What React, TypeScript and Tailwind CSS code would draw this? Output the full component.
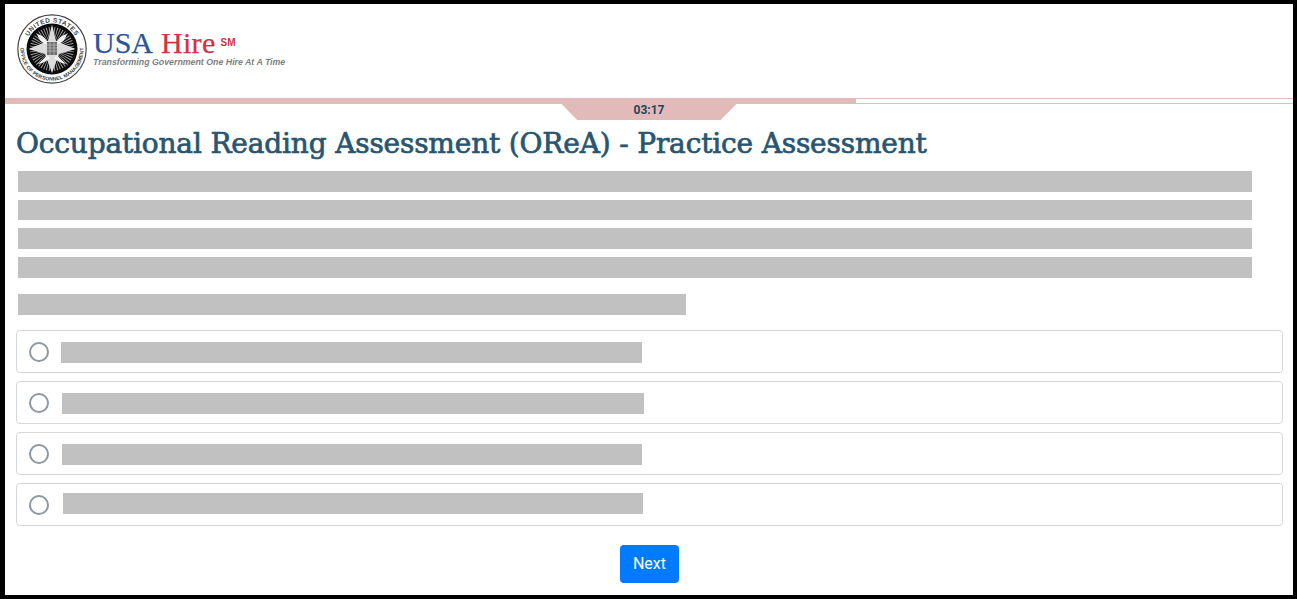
import React from 'react';

const Bar = ({ className }: { className: string }) => <div className={`bg-[#c1c1c1] ${className}`} />;

const Seal = () => {
  const rays = Array.from({ length: 48 }, (_, i) => i * 7.5);
  return (
    <svg width="70" height="70" viewBox="0 0 70 70" className="shrink-0">
      <defs>
        <path id="sealTop" d="M 35 35 m -26.6 0 a 26.6 26.6 0 1 1 53.2 0" />
        <path id="sealBottom" d="M 35 35 m -31.6 0 a 31.6 31.6 0 0 0 63.2 0" />
      </defs>
      <circle cx="35" cy="35" r="34.2" fill="#fff" stroke="#444" strokeWidth="1.2" />
      <text fontSize="6.4" fontFamily="'Liberation Sans', sans-serif" fontWeight="700" fill="#444" letterSpacing="0.55">
        <textPath href="#sealTop" startOffset="50%" textAnchor="middle">UNITED STATES</textPath>
      </text>
      <text fontSize="5.2" fontFamily="'Liberation Sans', sans-serif" fontWeight="700" fill="#444" letterSpacing="0.05">
        <textPath href="#sealBottom" startOffset="50%" textAnchor="middle">OFFICE OF PERSONNEL MANAGEMENT</textPath>
      </text>
      <circle cx="35" cy="35" r="25.5" fill="#0b0b0b" />
      {rays.map((a) => (
        <path key={a} d="M35 35 L34.5 13 L35.5 13 Z" fill="#a8a8a8" transform={`rotate(${a} 35 35)`} />
      ))}
      <path d="M35 10.5 L39 27 L58.5 35 L42 40 L35 59 L28 40 L11.5 35 L31 27 Z" fill="#dcdcdc" />
      <path d="M20 20 Q28 22 31 29 L28 30 Q22 27 20 20 Z M50 20 Q42 22 39 29 L42 30 Q48 27 50 20 Z" fill="#f2f2f2" />
      <path d="M21 50 Q27 45 30 41 L33 44 Q28 49 21 50 Z M49 50 Q43 45 40 41 L37 44 Q42 49 49 50 Z" fill="#f2f2f2" />
      <rect x="30" y="28" width="10" height="13" fill="#6f6f6f" />
      <path d="M30 31 H40 M30 34 H40 M30 37 H40 M33 28 V41 M37 28 V41" stroke="#cfcfcf" strokeWidth="0.6" />
    </svg>
  );
};

const options = [
  'w-[581px] ml-[44px] mt-[2px]',
  'w-[582px] ml-[45px] mt-[2px]',
  'w-[580px] ml-[45px] mt-[2px]',
  'w-[580px] ml-[46px] mb-[2px]',
];

export default function App() {
  return (
    <div className="h-[599px] w-full bg-white border-solid border-black border-t-[4px] border-l-[5px] border-r-[4px] border-b-[4px] font-['Roboto',sans-serif]">
      <header className="h-[94px] flex items-center pl-[12px] pb-[4px]">
        <Seal />
        <div className="ml-[6px] -mt-[3px]">
          <div className="h-[28px] flex items-start font-['Liberation_Serif',serif] text-[30px] leading-[28px] [-webkit-text-stroke:0.25px_currentColor]">
            <span className="text-[#2a5599]">USA</span>
            <span className="text-[#cf3440] ml-[8px] tracking-[0.3px]">Hire</span>
            <span className="text-[#cf3440] font-['Liberation_Sans',sans-serif] font-bold text-[10px] leading-[10px] ml-[5px] mt-[9px] [-webkit-text-stroke:0px]">SM</span>
          </div>
          <div className="font-['Liberation_Sans',sans-serif] italic font-bold text-[8.8px] leading-[10px] text-[#808080]">
            Transforming Government One Hire At A Time
          </div>
        </div>
      </header>

      <div className="h-[6px] border-solid border-y border-[#e2baba]">
        <div className="h-[6px] -mt-[1px] w-[851px] bg-[#e2baba]" />
      </div>
      <div className="flex justify-center">
        <div className="w-[175px] h-[16px] bg-[#e2baba] [clip-path:polygon(0_0,100%_0,91%_100%,9%_100%)] text-center text-[12px] leading-[13px] font-bold text-[#24465c]">
          03:17
        </div>
      </div>

      <main className="pl-[11px] pr-[10px]">
        <h1 className="mt-[5px] h-[37px] font-['DejaVu_Serif',serif] text-[28px] leading-[38px] font-normal text-[#285570] [-webkit-text-stroke:0.7px_#285570] whitespace-nowrap tracking-[-0.17px]">
          Occupational Reading Assessment (OReA) - Practice Assessment
        </h1>
        <div className="mt-[9px] pl-[2px] flex flex-col">
          <Bar className="h-[21px] w-[1234px]" />
          <Bar className="h-[20px] w-[1234px] mt-[8px]" />
          <Bar className="h-[21px] w-[1234px] mt-[8px]" />
          <Bar className="h-[21px] w-[1234px] mt-[8px]" />
          <Bar className="h-[21px] w-[668px] mt-[16px]" />
        </div>
        <div className="mt-[15px] flex flex-col gap-[8px]">
          {options.map((bar, i) => (
            <div key={i} className="h-[43px] relative flex items-center border border-solid border-[#d5d8da] rounded-[4px]">
              <div className="absolute left-[12px] top-[11px] w-[20px] h-[20px] rounded-full border-2 border-solid border-[#8c98a2] bg-white" />
              <Bar className={`h-[21px] ${bar}`} />
            </div>
          ))}
        </div>
        <div className="mt-[19px] flex justify-center">
          <button className="w-[59px] h-[38px] bg-[#007bff] text-white text-[16px] rounded-[4px]">Next</button>
        </div>
      </main>
    </div>
  );
}
